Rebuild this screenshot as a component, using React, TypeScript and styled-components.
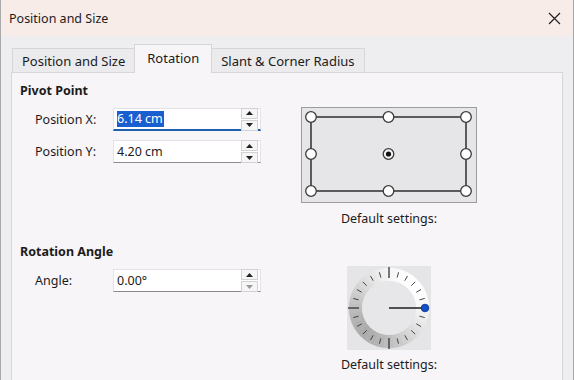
import React from 'react';
import styled, { createGlobalStyle } from 'styled-components';

const GlobalStyle = createGlobalStyle`
  html, body {
    margin: 0;
    padding: 0;
    background: #eeedf0;
  }
  body {
    font-family: 'Noto Sans', 'Open Sans', sans-serif;
    color: #1b1b1b;
  }
`;

const Window = styled.div`
  width: 574px;
  height: 380px;
  box-sizing: border-box;
  border-left: 1px solid #a9a9ab;
  border-right: 1px solid #a9a9ab;
  background: #eeedf0;
  overflow: hidden;
  display: flex;
  flex-direction: column;
`;

const TitleBar = styled.div`
  height: 36px;
  flex: none;
  display: flex;
  align-items: center;
  justify-content: space-between;
  padding: 0 12px 0 8px;
  background: #f8ece9;
  font-size: 12.5px;
`;

const Body = styled.div`
  flex: 1;
  display: flex;
  flex-direction: column;
  padding: 8px 10px 0 10px;
`;

const TabRow = styled.div`
  display: flex;
  align-items: flex-end;
  height: 29px;
  padding-left: 1px;
  margin-bottom: -1px;
  position: relative;
  z-index: 1;
`;

const Tab = styled.div<{ $active?: boolean }>`
  box-sizing: border-box;
  height: ${(p) => (p.$active ? 29 : 25)}px;
  display: flex;
  align-items: center;
  padding: 0 ${(p) => (p.$active ? 12 : 9)}px;
  font-size: 13px;
  border: 1px solid #d6d5d8;
  border-bottom: ${(p) => (p.$active ? 'none' : '1px solid #d6d5d8')};
  margin-left: ${(p) => (p.$active ? -1 : 0)}px;
  margin-right: ${(p) => (p.$active ? -1 : 0)}px;
  background: ${(p) => (p.$active ? '#f7f5f8' : '#ebeaed')};
  padding-bottom: ${(p) => (p.$active ? 2 : 0)}px;
`;

const Panel = styled.div`
  flex: 1;
  background: #f7f5f8;
  border: 1px solid #d6d5d8;
  border-bottom: none;
  padding: 9px 8px 0 8px;
`;

const Section = styled.div<{ $gap?: number }>`
  display: flex;
  margin-top: ${(p) => p.$gap ?? 0}px;
`;

const LeftCol = styled.div`
  width: 269px;
  flex: none;
`;

const RightCol = styled.div<{ $top: number }>`
  width: 200px;
  display: flex;
  flex-direction: column;
  align-items: center;
  padding-top: ${(p) => p.$top}px;
`;

const Heading = styled.div`
  font-weight: 700;
  font-size: 12.5px;
  line-height: 18px;
`;

const Fields = styled.div`
  display: flex;
  flex-direction: column;
  gap: 9px;
  margin-top: 8px;
  padding-left: 15px;
`;

const FieldRow = styled.div`
  display: flex;
  align-items: center;
`;

const Label = styled.div`
  width: 78px;
  font-size: 12.5px;
`;

const SpinInput = styled.div<{ $focused?: boolean }>`
  box-sizing: border-box;
  width: 148px;
  height: 23px;
  display: flex;
  align-items: center;
  justify-content: space-between;
  background: #ffffff;
  border: 1px solid #e3e2e5;
  border-bottom: ${(p) => (p.$focused ? '2px solid #1f5fae' : '1px solid #8b8b8d')};
  padding: 0 2px 0 3px;
  font-size: 12.5px;
`;

const Value = styled.span<{ $selected?: boolean }>`
  background: ${(p) => (p.$selected ? '#1a5fd0' : 'transparent')};
  color: ${(p) => (p.$selected ? '#ffffff' : '#1b1b1b')};
  line-height: 16px;
  padding-right: 1px;
`;

const Spinner = styled.div`
  display: flex;
  flex-direction: column;
  gap: 1px;
  width: 17px;
`;

const SpinButton = styled.div<{ $dim?: boolean }>`
  height: 9px;
  display: flex;
  align-items: center;
  justify-content: center;
  border: 1px solid #d2d2d4;
  background: #f6f6f7;
  color: ${(p) => (p.$dim ? '#9a9a9a' : '#202020')};
`;

const Caption = styled.div<{ $top: number }>`
  margin-top: ${(p) => p.$top}px;
  font-size: 12.5px;
  line-height: 18px;
`;

const Arrow: React.FC<{ down?: boolean }> = ({ down }) => (
  <svg width="7" height="4" viewBox="0 0 7 4">
    <polygon points={down ? '0,0 7,0 3.5,4' : '0,4 7,4 3.5,0'} fill="currentColor" />
  </svg>
);

const Spin: React.FC<{ dimDown?: boolean }> = ({ dimDown }) => (
  <Spinner>
    <SpinButton>
      <Arrow />
    </SpinButton>
    <SpinButton $dim={dimDown}>
      <Arrow down />
    </SpinButton>
  </Spinner>
);

const CloseIcon = () => (
  <svg width="13" height="13" viewBox="0 0 13 13">
    <path d="M1 1 L12 12 M12 1 L1 12" stroke="#222" strokeWidth="1.2" />
  </svg>
);

const PivotWidget = () => {
  const xs = [10, 87.5, 165];
  const ys = [10, 47, 84];
  const pts: [number, number][] = [];
  ys.forEach((y, j) =>
    xs.forEach((x, i) => {
      if (!(i === 1 && j === 1)) pts.push([x, y]);
    })
  );
  return (
    <svg width="176" height="96" viewBox="0 0 176 96">
      <rect x="0.5" y="0.5" width="175" height="95" fill="#e6e5e8" stroke="#9c9c9e" />
      <rect x="10" y="10" width="155" height="74" fill="none" stroke="#3a3a3a" strokeWidth="1.6" />
      {pts.map(([x, y]) => (
        <circle key={`${x}-${y}`} cx={x} cy={y} r="5.3" fill="#ffffff" stroke="#3a3a3a" strokeWidth="1.3" />
      ))}
      <circle cx="87.5" cy="47" r="5.3" fill="#f4f4f4" stroke="#3a3a3a" strokeWidth="1.3" />
      <circle cx="87.5" cy="47" r="2.6" fill="#111" />
    </svg>
  );
};

const AngleDial = () => {
  const c = 42;
  const rIn = 27;
  const rOut = 40;
  const segs = [];
  const n = 48;
  for (let i = 0; i < n; i++) {
    const a0 = (i / n) * Math.PI * 2;
    const a1 = ((i + 1) / n) * Math.PI * 2;
    const mid = (a0 + a1) / 2;
    const light = 0.5 * (1 + Math.cos(mid - Math.PI / 4));
    const v = Math.round(172 + 83 * Math.pow(light, 0.8));
    const p = (a: number, r: number) => `${c + r * Math.cos(a)},${c - r * Math.sin(a)}`;
    segs.push(
      <polygon
        key={i}
        points={`${p(a0, rIn)} ${p(a0, rOut)} ${p(a1, rOut)} ${p(a1, rIn)}`}
        fill={`rgb(${v},${v},${v})`}
        stroke={`rgb(${v},${v},${v})`}
        strokeWidth="0.4"
      />
    );
  }
  const ticks = [];
  for (let i = 1; i < 24; i++) {
    const a = (i * 15 * Math.PI) / 180;
    const long = i % 6 === 0;
    const r0 = long ? 30 : 31.5;
    const r1 = long ? 41 : 37;
    ticks.push(
      <line
        key={i}
        x1={c + r0 * Math.cos(a)}
        y1={c - r0 * Math.sin(a)}
        x2={c + r1 * Math.cos(a)}
        y2={c - r1 * Math.sin(a)}
        stroke="#333"
        strokeWidth={long ? 1.3 : 0.9}
      />
    );
  }
  return (
    <svg width="84" height="84" viewBox="0 0 84 84">
      <rect x="0" y="0" width="84" height="84" fill="#e5e4e7" />
      {segs}
      <circle cx={c} cy={c} r={rIn} fill="#e7e6e9" />
      {ticks}
      <line x1={c} y1={c} x2={c + 36} y2={c} stroke="#1e1e1e" strokeWidth="1.4" />
      <circle cx={c + 36} cy={c} r="3.8" fill="#1050c8" stroke="#0a2f80" strokeWidth="0.8" />
    </svg>
  );
};

const App: React.FC = () => {
  return (
    <>
      <GlobalStyle />
      <Window>
        <TitleBar>
          <span>Position and Size</span>
          <CloseIcon />
        </TitleBar>
        <Body>
          <TabRow>
            <Tab>Position and Size</Tab>
            <Tab $active>Rotation</Tab>
            <Tab>Slant &amp; Corner Radius</Tab>
          </TabRow>
          <Panel>
            <Section>
              <LeftCol>
                <Heading>Pivot Point</Heading>
                <Fields>
                  <FieldRow>
                    <Label>Position X:</Label>
                    <SpinInput $focused>
                      <Value $selected>6.14 cm</Value>
                      <Spin />
                    </SpinInput>
                  </FieldRow>
                  <FieldRow>
                    <Label>Position Y:</Label>
                    <SpinInput>
                      <Value>4.20 cm</Value>
                      <Spin />
                    </SpinInput>
                  </FieldRow>
                </Fields>
              </LeftCol>
              <RightCol $top={25}>
                <PivotWidget />
                <Caption $top={7}>Default settings:</Caption>
              </RightCol>
            </Section>
            <Section $gap={15}>
              <LeftCol>
                <Heading>Rotation Angle</Heading>
                <Fields>
                  <FieldRow>
                    <Label>Angle:</Label>
                    <SpinInput>
                      <Value>0.00°</Value>
                      <Spin dimDown />
                    </SpinInput>
                  </FieldRow>
                </Fields>
              </LeftCol>
              <RightCol $top={23}>
                <AngleDial />
                <Caption $top={6}>Default settings:</Caption>
              </RightCol>
            </Section>
          </Panel>
        </Body>
      </Window>
    </>
  );
};

export default App;
